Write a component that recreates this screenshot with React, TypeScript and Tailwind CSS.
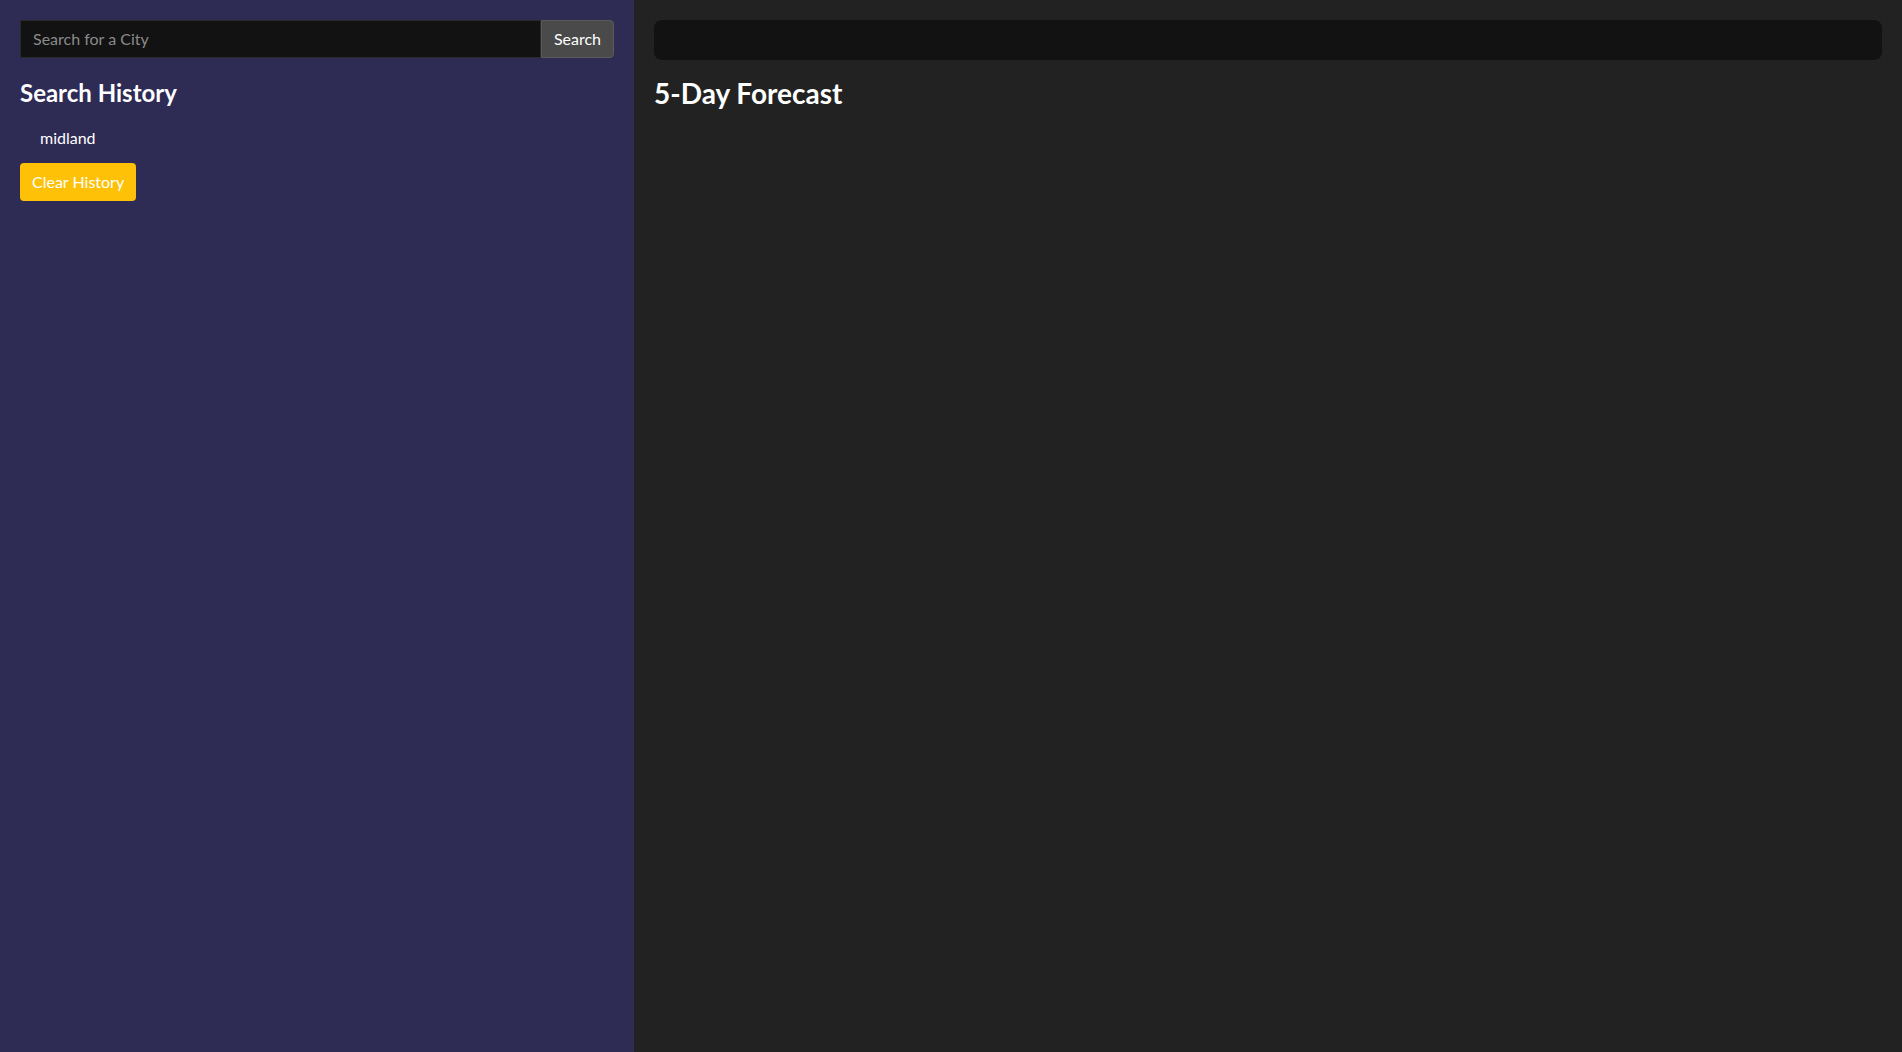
import React from "react";

export default function App() {
  return (
    <div className="flex h-[1052px] w-full font-['Lato',sans-serif]">
      <aside className="w-[634px] shrink-0 bg-[#2e2b55] px-5 pt-5">
        <div className="flex h-[38px]">
          <input
            placeholder="Search for a City"
            className="flex-1 min-w-0 bg-[#121212] border border-[#2a2a2a] px-3 text-base text-white placeholder:text-[#8a8a8a] outline-none"
          />
          <button className="w-[73px] bg-[#4a4a4a] border border-[#5a5a5a] rounded-r text-base text-white">
            Search
          </button>
        </div>
        <h2 className="mt-5 text-[24px] leading-[29px] font-bold text-white">Search History</h2>
        <ul className="mt-[19px] pl-5">
          <li className="text-base leading-6 text-white">midland</li>
        </ul>
        <button className="mt-[13px] h-[38px] px-3 rounded bg-[#ffc107] text-base text-white">
          Clear History
        </button>
      </aside>
      <main className="flex-1 bg-[#222222] px-5 pt-5">
        <div className="h-10 rounded-lg bg-[#121212]" />
        <h2 className="mt-4 text-[28px] leading-[34px] font-bold text-white">5-Day Forecast</h2>
      </main>
    </div>
  );
}
